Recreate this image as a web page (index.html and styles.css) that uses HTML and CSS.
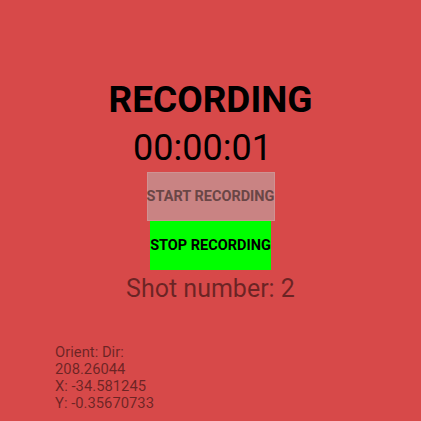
FILE: index.html
```html
<!DOCTYPE html>
<html>
<head>
<meta charset="utf-8">
<link rel="stylesheet" href="styles.css">
</head>
<body>
<div class="screen">
  <div class="center">
    <div class="title">RECORDING</div>
    <div class="timer">00:00:01</div>
    <div class="btn start">START RECORDING</div>
    <div class="btn stop">STOP RECORDING</div>
    <div class="shot">Shot number: 2</div>
  </div>
  <div class="info">
    <div>Orient: Dir:</div>
    <div>208.26044</div>
    <div>X: -34.581245</div>
    <div>Y: -0.35670733</div>
  </div>
</div>
</body>
</html>
```
FILE: styles.css
```css
html, body {
  margin: 0;
  padding: 0;
  width: 421px;
  height: 421px;
  overflow: hidden;
  background: #d74949;
  font-family: Roboto, "Noto Sans", sans-serif;
}
.screen {
  width: 421px;
  height: 421px;
  display: flex;
  flex-direction: column;
}
.center {
  display: flex;
  flex-direction: column;
  align-items: center;
  padding-top: 79px;
}
.title {
  font-size: 37px;
  font-weight: 700;
  line-height: 42px;
  color: #000;
}
.timer {
  margin-top: 6px;
  font-size: 36px;
  line-height: 42px;
  color: #000;
  padding-right: 16px;
}
.btn {
  display: flex;
  align-items: center;
  justify-content: center;
  height: 49px;
  font-size: 14.5px;
  font-weight: 700;
  white-space: nowrap;
}
.start {
  margin-top: 3px;
  width: 128px;
  background: #c98383;
  color: #6a4646;
  box-shadow: 0 0 0 1px rgba(255,255,255,0.12) inset;
}
.stop {
  width: 121px;
  background: #00ff00;
  color: #000;
}
.shot {
  margin-top: 5px;
  font-size: 25px;
  line-height: 28px;
  color: rgba(0,0,0,0.5);
}
.info {
  margin-top: 41px;
  padding-left: 55px;
  font-size: 14.8px;
  line-height: 17px;
  color: rgba(0,0,0,0.5);
}
```
